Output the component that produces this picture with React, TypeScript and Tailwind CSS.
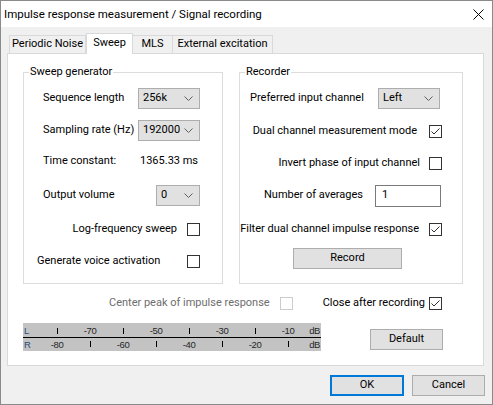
const FONT = 'font-["Roboto","Noto_Sans",sans-serif]';

function Chevron() {
  return (
    <svg width="9" height="5" viewBox="0 0 9 5" className="shrink-0">
      <path d="M0.5 0.5 L4.5 4.5 L8.5 0.5" fill="none" stroke="#606060" strokeWidth="1" />
    </svg>
  );
}

function Dropdown({ value, width }: { value: string; width: string }) {
  return (
    <div className={`${width} h-[21px] shrink-0 border border-[#adadad] bg-[#e1e1e1] flex items-center justify-between pl-[4px] pr-[6px]`}>
      <span>{value}</span>
      <Chevron />
    </div>
  );
}

function Checkbox({ checked = false, disabled = false }: { checked?: boolean; disabled?: boolean }) {
  return (
    <div
      className={`w-[13px] h-[13px] shrink-0 border bg-white flex items-center justify-center ${
        disabled ? 'border-[#cccccc]' : 'border-[#333333]'
      }`}
    >
      {checked && (
        <svg width="11" height="11" viewBox="0 0 11 11">
          <path d="M1.5 5.5 L4 8 L9.5 2.5" fill="none" stroke="#333333" strokeWidth="1" />
        </svg>
      )}
    </div>
  );
}

function Button({ label, width, focused = false }: { label: string; width: string; focused?: boolean }) {
  return (
    <div
      className={`${width} h-[21px] shrink-0 bg-[#e1e1e1] flex items-center justify-center ${
        focused ? 'border-2 border-[#0078d7]' : 'border border-[#adadad]'
      }`}
    >
      {label}
    </div>
  );
}

function GroupBox({ title, width, children }: { title: string; width: string; children: React.ReactNode }) {
  return (
    <div className={`relative ${width} h-[212px] border border-[#dcdcdc] flex flex-col`}>
      <span className="absolute -top-[9px] left-[5px] px-[1px] bg-white leading-[16px]">{title}</span>
      {children}
    </div>
  );
}

// level meter scale: 3.3 px per dB, 0 dB at the right edge
const dbX = (d: number) => 34 + (d + 80) * 3.3;

function MeterScale() {
  const even = [-80, -60, -40, -20];
  const odd = [-70, -50, -30, -10];
  return (
    <svg width="298" height="28" viewBox="0 0 298 28" className="shrink-0">
      <rect x="0" y="0" width="298" height="28" fill="#c3c3c3" />
      <line x1="0" y1="14.5" x2="298" y2="14.5" stroke="#000" strokeWidth="1" />
      {even.map(d => (
        <line key={`lt${d}`} x1={Math.round(dbX(d)) + 0.5} y1="5" x2={Math.round(dbX(d)) + 0.5} y2="11" stroke="#000" />
      ))}
      {odd.map(d => (
        <line key={`rt${d}`} x1={Math.round(dbX(d)) + 0.5} y1="18" x2={Math.round(dbX(d)) + 0.5} y2="24" stroke="#000" />
      ))}
      <g fontFamily="Liberation Sans, Arial, sans-serif" fontSize="9.5" fill="#262626" letterSpacing="-0.4">
        {odd.map(d => (
          <text key={`ll${d}`} x={dbX(d)} y="11" textAnchor="middle">{d}</text>
        ))}
        {even.map(d => (
          <text key={`rl${d}`} x={dbX(d)} y="25" textAnchor="middle">{d}</text>
        ))}
        <text x="297" y="11" textAnchor="end">dB</text>
        <text x="297" y="25" textAnchor="end">dB</text>
        <text x="1" y="11" fill="#2c4a7c">L</text>
        <text x="1" y="25" fill="#2c4a7c">R</text>
      </g>
    </svg>
  );
}

const TABS = [
  { label: 'Periodic Noise', width: 'w-[77px]' },
  { label: 'Sweep', width: 'w-[47px]' },
  { label: 'MLS', width: 'w-[41px]' },
  { label: 'External excitation', width: 'w-[101px]' },
];

export default function App() {
  return (
    <div className={`${FONT} text-[11px] whitespace-nowrap text-black w-[493px] h-[405px] bg-[#f0f0f0] border border-[#8a8a8a] flex flex-col overflow-hidden`}>
      {/* title bar */}
      <div className="h-[26px] bg-white flex items-center justify-between pl-[3px] pr-[8px] pt-[1px] shrink-0">
        <span className="text-[11.5px]">Impulse response measurement / Signal recording</span>
        <svg width="11" height="11" viewBox="0 0 11 11">
          <path d="M0.5 0.5 L10.5 10.5 M10.5 0.5 L0.5 10.5" stroke="#000" strokeWidth="1" />
        </svg>
      </div>

      {/* tabs */}
      <div className="flex items-end pl-[8px] pt-[6px] h-[26px] shrink-0">
        {TABS.map(t => {
          const selected = t.label === 'Sweep';
          return selected ? (
            <div
              key={t.label}
              className={`${t.width} h-[21px] -mb-[1px] relative z-10 bg-white border border-b-0 border-[#d9d9d9] flex items-center justify-center pb-[2px]`}
            >
              {t.label}
            </div>
          ) : (
            <div
              key={t.label}
              className={`${t.width} h-[18px] -ml-[1px] first:ml-0 bg-[#f0f0f0] border border-b-0 border-[#d9d9d9] flex items-center justify-center`}
            >
              {t.label}
            </div>
          );
        })}
      </div>

      {/* tab page */}
      <div className="ml-[6px] w-[477px] h-[313px] bg-white border border-[#d9d9d9] flex flex-col shrink-0">
        <div className="flex gap-[16px] pl-[15px] pt-[18px]">
          <GroupBox title="Sweep generator" width="w-[200px]">
            <div className="mt-[15px] h-[21px] flex items-center justify-between pl-[19px] pr-[22px]">
              <span>Sequence length</span>
              <Dropdown value="256k" width="w-[62px]" />
            </div>
            <div className="mt-[11px] h-[21px] flex items-center justify-between pl-[19px] pr-[22px]">
              <span>Sampling rate (Hz)</span>
              <Dropdown value="192000" width="w-[62px]" />
            </div>
            <div className="mt-[10px] h-[21px] flex items-center pl-[19px]">
              <span className="w-[97px]">Time constant:</span>
              <span>1365.33 ms</span>
            </div>
            <div className="mt-[13px] h-[21px] flex items-center justify-between pl-[19px] pr-[22px]">
              <span>Output volume</span>
              <Dropdown value="0" width="w-[44px]" />
            </div>
            <div className="mt-[17px] h-[13px] flex items-center justify-end gap-[10px] pr-[22px]">
              <span>Log-frequency sweep</span>
              <Checkbox />
            </div>
            <div className="mt-[19px] h-[13px] flex items-center justify-between pl-[13px] pr-[22px]">
              <span>Generate voice activation</span>
              <Checkbox />
            </div>
          </GroupBox>

          <GroupBox title="Recorder" width="w-[224px]">
            <div className="mt-[15px] h-[21px] flex items-center justify-between pl-[10px] pr-[22px]">
              <span>Preferred input channel</span>
              <Dropdown value="Left" width="w-[62px]" />
            </div>
            <div className="mt-[16px] h-[13px] flex items-center justify-end gap-[12px] pr-[20px]">
              <span>Dual channel measurement mode</span>
              <Checkbox checked />
            </div>
            <div className="mt-[19px] h-[13px] flex items-center justify-end gap-[9px] pr-[20px]">
              <span>Invert phase of input channel</span>
              <Checkbox />
            </div>
            <div className="mt-[15px] h-[21px] flex items-center justify-end gap-[12px] pr-[21px]">
              <span>Number of averages</span>
              <div className="w-[66px] h-[22px] border border-[#7a7a7a] bg-white flex items-center pl-[6px]">1</div>
            </div>
            <div className="mt-[17px] h-[13px] flex items-center justify-end gap-[10px] pr-[20px]">
              <span>Filter dual channel impulse response</span>
              <Checkbox checked />
            </div>
            <div className="mt-[12px] pl-[53px]">
              <Button label="Record" width="w-[109px]" />
            </div>
          </GroupBox>
        </div>

        <div className="mt-[13px] h-[13px] flex items-center justify-end pr-[41px]">
          <span className="text-[#6d6d6d]">Center peak of impulse response</span>
          <div className="ml-[10px]">
            <Checkbox disabled />
          </div>
          <span className="ml-[30px]">Close after recording</span>
          <div className="ml-[4px]">
            <Checkbox checked />
          </div>
        </div>

        <div className="mt-[13px] flex items-start justify-between pl-[15px] pr-[40px]">
          <MeterScale />
          <div className="mt-[6px]">
            <Button label="Default" width="w-[73px]" />
          </div>
        </div>
      </div>

      {/* dialog buttons */}
      <div className="mt-[9px] flex justify-end gap-[8px] pr-[7px]">
        <Button label="OK" width="w-[74px]" focused />
        <Button label="Cancel" width="w-[73px]" />
      </div>
    </div>
  );
}
